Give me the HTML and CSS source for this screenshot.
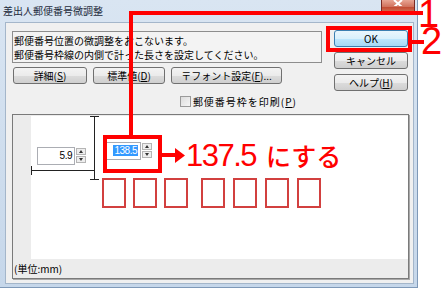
FILE: index.html
```html
<!DOCTYPE html>
<html lang="ja">
<head>
    <meta charset="UTF-8">
    <title>差出人郵便番号微調整</title>
    <link rel="stylesheet" href="styles.css">
</head>
<body>
    <div class="window">
        <div class="titlebar">
            <span class="title">差出人郵便番号微調整</span>
            <span class="close-btn">
                <svg width="10" height="6" viewBox="0 0 10 6"><path d="M1 0 L5 3.5 L9 0 M1 7 L5 3.5 L9 7" stroke="#fff" stroke-width="2" fill="none"/></svg>
            </span>
        </div>
        <div class="client">
            <div class="top">
                <div class="left-col">
                    <div class="info">
                        郵便番号位置の微調整をおこないます。<br>
                        郵便番号枠線の内側で計った長さを設定してください。
                    </div>
                    <div class="btn-row">
                        <button class="btn btn-s">詳細(<u>S</u>)</button>
                        <button class="btn btn-d">標準値(<u>D</u>)</button>
                        <button class="btn btn-f">〒フォント設定(<u>F</u>)...</button>
                    </div>
                    <div class="check-row">
                        <span class="checkbox"></span>
                        <span class="check-label">郵便番号枠を印刷(<u>P</u>)</span>
                    </div>
                </div>
                <div class="right-col">
                    <button class="btn btn-default">OK</button>
                    <button class="btn">キャンセル</button>
                    <button class="btn">ヘルプ(<u>H</u>)</button>
                </div>
            </div>

            <div class="preview">
                <div class="strip"></div>
                <div class="canvas">
                    <svg class="dims" width="376" height="143" viewBox="0 0 376 143">
                        <g stroke="#222" stroke-width="1" fill="none">
                            <path d="M63.5 0 V64"/>
                            <path d="M59 0.5 H68"/>
                            <path d="M59 63.5 H68"/>
                            <path d="M0 54.5 H63"/>
                            <path d="M0.5 50 V59"/>
                        </g>
                    </svg>

                    <div class="spin spin-left">
                        <div class="spin-edit">5.9</div>
                        <div class="spin-arrows">
                            <span class="arrow up"></span>
                            <span class="arrow down"></span>
                        </div>
                    </div>

                    <div class="spin spin-top">
                        <div class="spin-edit"><span class="selected">138.5</span></div>
                        <div class="spin-arrows">
                            <span class="arrow up"></span>
                            <span class="arrow down"></span>
                        </div>
                    </div>

                    <div class="zip">
                        <div class="zip-group zip-first">
                            <span class="zip-box"></span>
                            <span class="zip-box"></span>
                            <span class="zip-box"></span>
                        </div>
                        <div class="zip-group">
                            <span class="zip-box"></span>
                            <span class="zip-box"></span>
                            <span class="zip-box"></span>
                            <span class="zip-box"></span>
                        </div>
                    </div>
                </div>
                <div class="unit">(単位:mm)</div>
            </div>
        </div>
    </div>

    <!-- red callouts drawn over the dialog -->
    <div class="mark mark-h1"></div>
    <div class="mark mark-v1"></div>
    <div class="label label-1">1</div>
    <div class="mark-rect rect-ok"></div>
    <div class="mark mark-h2"></div>
    <div class="label label-2">2</div>
    <div class="mark-rect rect-spin"></div>
    <div class="mark mark-arrow"></div>
    <svg class="arrow-head" width="10" height="15" viewBox="0 0 10 15"><polygon points="0,0 10,7.5 0,15" fill="#ff0000"/></svg>
    <div class="note"><span class="note-num">137.5</span><span class="note-kana">にする</span></div>
</body>
</html>
```

FILE: styles.css
```css
body {
    margin: 0;
    width: 441px;
    height: 288px;
    overflow: hidden;
    position: relative;
    background: #fff;
    font-family: "Noto Sans CJK JP", sans-serif;
    font-size: 10px;
    color: #000;
}

.window {
    width: 418px;
    height: 288px;
    box-sizing: border-box;
    display: flex;
    flex-direction: column;
    background: linear-gradient(#d9e5f2, #c6d7ea);
    border-right: 1px solid #7f99b8;
    border-bottom: 1px solid #7f99b8;
}

.titlebar {
    height: 22px;
    display: flex;
    align-items: center;
    padding-left: 3px;
}

.title {
    color: #1e2b3c;
    line-height: 12px;
    margin-top: -1px;
}

.close-btn {
    margin-left: auto;
    margin-right: 2px;
    align-self: flex-start;
    width: 34px;
    height: 15px;
    box-sizing: border-box;
    border: 1px solid #7a2a24;
    border-top: none;
    border-radius: 0 0 4px 4px;
    background: linear-gradient(#e8a493, #d0705b 50%, #c24a33 51%, #d5805e);
    display: flex;
    justify-content: center;
    align-items: flex-start;
}

.client {
    flex: 1;
    margin: 0 3px 3px 5px;
    background: #f0f0f0;
    border: 1px solid #a4b6ca;
    padding: 8px 4px 0 6px;
    display: flex;
    flex-direction: column;
}

.top {
    display: flex;
    justify-content: space-between;
}

.info {
    width: 310px;
    height: 32px;
    box-sizing: border-box;
    border: 1px solid #8d8d8d;
    background: #f3f3f3;
    padding: 2px 0 0 1px;
    line-height: 14px;
    white-space: nowrap;
}

.btn-row {
    display: flex;
    gap: 6px;
    margin-top: 4px;
    padding-left: 1px;
}

.btn {
    height: 17px;
    box-sizing: border-box;
    padding: 0;
    font-family: inherit;
    font-size: 10px;
    line-height: 15px;
    color: #000;
    border: 1px solid #707070;
    border-radius: 3px;
    background: linear-gradient(#f3f3f3, #ebebeb 50%, #dcdcdc 51%, #cfcfcf);
}

.btn-s { width: 74px; }
.btn-d { width: 72px; }
.btn-f { width: 111px; }

.check-row {
    width: 285px;
    height: 16px;
    margin-top: 9px;
    display: flex;
    justify-content: flex-end;
    align-items: center;
    gap: 2px;
}

.check-label {
    letter-spacing: 1px;
}

.checkbox {
    width: 9px;
    height: 9px;
    border: 1px solid #9a9a9a;
    background: linear-gradient(135deg, #dcdcdc, #f6f6f6);
}

.right-col {
    display: flex;
    flex-direction: column;
    gap: 5px;
    margin-top: -1px;
    margin-right: 1px;
}

.right-col .btn {
    width: 74px;
}

.btn-default {
    border-color: #3c7fb1;
    background: linear-gradient(#eaf6fd, #d9f0fc 50%, #bee6fd 51%, #a7d9f5);
}

.preview {
    margin-top: 5px;
    height: 165px;
    box-sizing: border-box;
    border: 1px solid #7a7a7a;
    box-shadow: 1px 1px 0 #a8a8a8;
    display: grid;
    grid-template-columns: 18px 1fr;
    grid-template-rows: 1fr 19px;
    background: #ececec;
}

.canvas {
    position: relative;
    background: #fff;
    margin-top: 1px;
}

.dims {
    position: absolute;
    left: 0;
    top: 0;
}

.unit {
    grid-column: 1 / 3;
    padding-left: 1px;
    line-height: 19px;
}

.spin {
    position: absolute;
    display: flex;
    gap: 1px;
}

.spin-left {
    left: 6px;
    top: 31px;
}

.spin-top {
    left: 72px;
    top: 26px;
}

.spin-edit {
    width: 38px;
    height: 18px;
    box-sizing: border-box;
    border: 1px solid #abadb3;
    background: #fff;
    text-align: right;
    padding-right: 2px;
    line-height: 16px;
    font-family: "Liberation Sans", sans-serif;
    font-size: 10px;
    letter-spacing: -0.5px;
}

.selected {
    background: #3399ff;
    color: #fff;
    padding: 0 1px;
}

.spin-arrows {
    display: flex;
    flex-direction: column;
    gap: 1px;
    padding-top: 1px;
}

.arrow {
    width: 10px;
    height: 7px;
    box-sizing: border-box;
    border: 1px solid #b5b5b5;
    background: #eeeeee;
    position: relative;
}

.arrow::after {
    content: "";
    position: absolute;
    left: 2px;
    border-left: 2px solid transparent;
    border-right: 2px solid transparent;
}

.arrow.up::after {
    top: 1px;
    border-bottom: 3px solid #333;
}

.arrow.down::after {
    top: 1px;
    border-top: 3px solid #333;
}

.zip {
    position: absolute;
    left: 71px;
    top: 62px;
    display: flex;
    gap: 13px;
}

.zip-group {
    display: flex;
    gap: 8px;
}

.zip-first {
    gap: 7px;
}

.zip-box {
    width: 24px;
    height: 30px;
    box-sizing: border-box;
    border: 2px solid #d2403f;
}

/* callouts */
.mark {
    position: absolute;
    background: #ff0000;
}

.mark-h1 { left: 129px; top: 11px; width: 294px; height: 4px; }
.mark-v1 { left: 129px; top: 11px; width: 4px; height: 125px; }
.mark-h2 { left: 411px; top: 40px; width: 13px; height: 4px; }
.mark-arrow { left: 161px; top: 153px; width: 16px; height: 4px; }

.mark-rect {
    position: absolute;
    box-sizing: border-box;
    border: 4px solid #ff0000;
}

.rect-ok { left: 326px; top: 26px; width: 86px; height: 26px; }
.rect-spin { left: 103px; top: 135px; width: 59px; height: 38px; }

.arrow-head {
    position: absolute;
    left: 175px;
    top: 148px;
}

.label {
    position: absolute;
    color: #ff0000;
    font-family: "Liberation Sans", sans-serif;
    font-size: 38px;
    line-height: 27px;
}

.label-1 { left: 418px; top: 1px; }
.label-2 { left: 421px; top: 28px; }

.note {
    position: absolute;
    left: 186px;
    top: 140px;
    color: #ff0000;
    line-height: 31px;
    white-space: nowrap;
}

.note-num {
    font-family: "Liberation Sans", sans-serif;
    font-size: 31px;
    letter-spacing: -1.5px;
}

.note-kana {
    margin-left: 10px;
    font-family: "Noto Sans CJK JP", sans-serif;
    font-size: 25px;
    font-weight: 500;
}
```
